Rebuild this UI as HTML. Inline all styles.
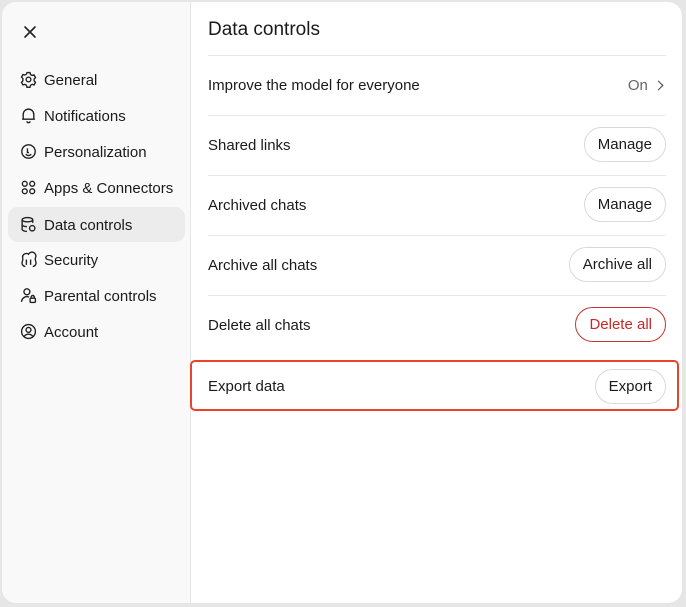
<!DOCTYPE html>
<html><head><style>
*{box-sizing:border-box;margin:0;padding:0}
body{width:686px;height:607px;background:#e6e6e6;font-family:"Liberation Sans",sans-serif;position:relative;overflow:hidden;color:#1a1a1a}
.dlg{position:absolute;left:2px;top:2px;width:680px;height:601px;background:#fff;border-radius:14px;overflow:hidden}
.side{position:absolute;left:0;top:0;width:189px;height:100%;background:#f9f9f9;border-right:1px solid #e6e6e6}
.x{position:absolute;left:20px;top:22px}
.item{position:absolute;left:6px;width:177px;height:35px;border-radius:10px;font-size:15px;line-height:37px;padding-left:36px}
.item.act{background:#ececec}
.item svg{position:absolute;left:12px;top:9px}
.title{position:absolute;left:206px;top:17px;font-size:19px}
.row{position:absolute;left:206px;width:458px;height:60px;border-top:1px solid #e8e8e8;font-size:15px}
.row .l{position:absolute;left:0;top:1px;line-height:58px}
.btn{position:absolute;right:0;top:11px;height:35px;border:1px solid #d9d9d9;border-radius:18px;font-size:15px;line-height:34px;padding:0 13px;background:#fff}
.red{position:absolute;left:188px;top:358px;width:489px;height:51px;border:2px solid #e8432c;border-radius:5px}
</style></head><body>
<div class="dlg">
<div class="side">
<svg class="x" width="16" height="16" viewBox="0 0 16 16"><path d="M3 3L13 13M13 3L3 13" stroke="#222" stroke-width="1.6" stroke-linecap="round"/></svg>
<div class="item" style="top:60px"><svg width="17" height="17" viewBox="0 0 16 16" fill="none" stroke="#222" stroke-width="1.3"><path d="M6.6 1.5h2.8l.5 1.8 1.5.9 1.8-.5 1.4 2.4-1.3 1.4v1.8l1.3 1.4-1.4 2.4-1.8-.5-1.5.9-.5 1.8H6.6l-.5-1.8-1.5-.9-1.8.5-1.4-2.4 1.3-1.4V7.1L1.4 5.7l1.4-2.4 1.8.5 1.5-.9z"/><circle cx="8" cy="8" r="2.2"/></svg>General</div>
<div class="item" style="top:96px"><svg width="17" height="17" viewBox="0 0 16 16" fill="none" stroke="#222" stroke-width="1.3"><path d="M3 11.5V7a5 5 0 0110 0v4.5h1H2zM6.3 13.5a1.8 1.8 0 003.4 0"/></svg>Notifications</div>
<div class="item" style="top:132px"><svg width="17" height="17" viewBox="0 0 16 16" fill="none" stroke="#222" stroke-width="1.3"><circle cx="8" cy="8" r="6.3"/><path d="M7 5v4h1.5M5.5 10.5a3 3 0 005 0"/></svg>Personalization</div>
<div class="item" style="top:168px"><svg width="17" height="17" viewBox="0 0 16 16" fill="none" stroke="#222" stroke-width="1.3"><circle cx="4.5" cy="4.5" r="2.3"/><circle cx="11.5" cy="11.5" r="2.3"/><circle cx="4.5" cy="11.5" r="2.3"/><circle cx="11.5" cy="4.5" r="2.3"/></svg>Apps &amp; Connectors</div>
<div class="item act" style="top:205px"><svg width="17" height="17" viewBox="0 0 16 16" fill="none" stroke="#222" stroke-width="1.3"><ellipse cx="7" cy="3.5" rx="5" ry="2"/><path d="M2 3.5v9c0 1 2 2 4.5 2M12 3.5v3M2 8c0 1 2 2 4.5 2"/><circle cx="11.5" cy="11.5" r="2.5"/></svg>Data controls</div>
<div class="item" style="top:240px"><svg width="17" height="17" viewBox="0 0 16 16" fill="none" stroke="#222" stroke-width="1.3"><path d="M5 14.5c-2 0-3.5-2-3-4 .4-1.5 1-2.5.5-4A3.5 3.5 0 018 3a3.5 3.5 0 016.5 3.5c-.5 1.5.1 2.5.5 4 .5 2-1 4-3 4M6 8v5M10 8v5"/></svg>Security</div>
<div class="item" style="top:276px"><svg width="17" height="17" viewBox="0 0 16 16" fill="none" stroke="#222" stroke-width="1.3"><circle cx="6.5" cy="4.5" r="2.8"/><path d="M1.5 14a5 5 0 017-4.5"/><rect x="9.5" y="10.5" width="5" height="4" rx="1"/><path d="M10.5 10.5v-1a1.5 1.5 0 013 0v1"/></svg>Parental controls</div>
<div class="item" style="top:312px"><svg width="17" height="17" viewBox="0 0 16 16" fill="none" stroke="#222" stroke-width="1.3"><circle cx="8" cy="8" r="6.5"/><circle cx="8" cy="6.5" r="2.3"/><path d="M4 12.5a5 5 0 018 0"/></svg>Account</div>
</div>
<div class="title">Data controls</div>
<div class="row" style="top:53px"><div class="l">Improve the model for everyone</div><div style="position:absolute;right:0;top:1px;line-height:58px;color:#666">On <span style="display:inline-block;width:7px;height:7px;border-top:1.5px solid #444;border-right:1.5px solid #444;transform:rotate(45deg);margin:0 4px 1px 3px"></span></div></div>
<div class="row" style="top:113px"><div class="l">Shared links</div><div class="btn">Manage</div></div>
<div class="row" style="top:173px"><div class="l">Archived chats</div><div class="btn">Manage</div></div>
<div class="row" style="top:233px"><div class="l">Archive all chats</div><div class="btn">Archive all</div></div>
<div class="row" style="top:293px"><div class="l">Delete all chats</div><div class="btn" style="border-color:#c83232;color:#c62828">Delete all</div></div>
<div class="row" style="top:353px;border-top:none"><div class="l" style="line-height:62px">Export data</div><div class="btn" style="top:14px">Export</div></div>
<div class="red"></div>
</div>
</body></html>
